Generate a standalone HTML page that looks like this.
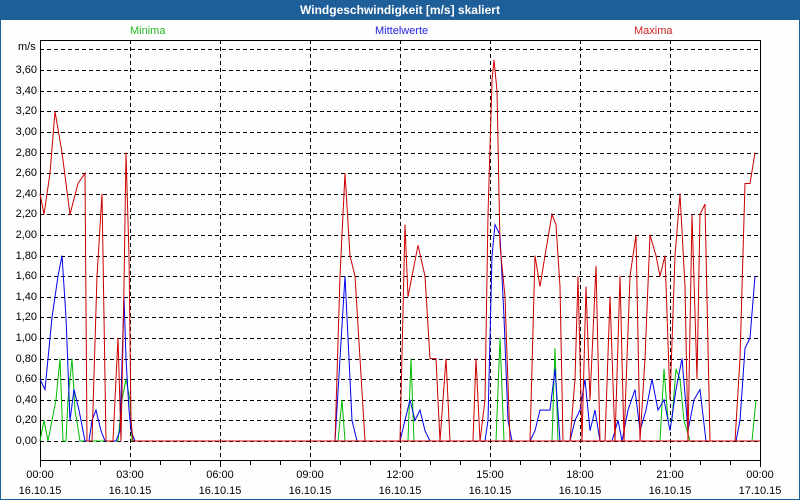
<!DOCTYPE html>
<html><head><meta charset="utf-8"><style>
body{margin:0;width:800px;height:500px;overflow:hidden;background:#fff;font-family:"Liberation Sans",sans-serif;}
#wrap{position:absolute;left:0;top:0;width:798px;height:498px;border:1px solid #1f5f99;background:#fefefe}
#title{position:absolute;left:0;top:0;width:800px;height:20px;background:#1f5f99;color:#fff;font-weight:bold;font-size:12px;line-height:20px;text-align:center}
.t{position:absolute;font-size:11px;color:#000;white-space:nowrap}
</style></head><body>
<div id="wrap"></div>
<div id="title">Windgeschwindigkeit [m/s] skaliert</div>
<div class="t" style="left:130px;top:25px;color:#22bb22">Minima</div>
<div class="t" style="left:375px;top:25px;color:#2222dd">Mittelwerte</div>
<div class="t" style="left:634px;top:25px;color:#cc2222">Maxima</div>
<div class="t" style="left:18px;top:41px">m/s</div>
<div id="ylab"></div>
<div id="xlab"></div>
<svg width="800" height="500" style="position:absolute;left:0;top:0">
<g id="grid" stroke="#000" stroke-width="1" stroke-dasharray="4,3" fill="none"></g>
<rect x="40.5" y="40.5" width="720" height="420" fill="none" stroke="#000"/>
<g id="ticks" stroke="#000"></g>
<g id="data" fill="none" stroke-width="1"></g>
</svg>
<script>
var Y=function(v){return 441-v*103;};
var g='',yl='';
for(var i=0;i<=18;i++){var v=i*0.2,y=Math.round(Y(v))+0.5;g+='<line x1="40" x2="760" y1="'+y+'" y2="'+y+'"/>';
yl+='<div class="t" style="right:'+(800-37)+'px;top:'+(y-7)+'px;width:40px;text-align:right;right:auto;left:-3px">'+v.toFixed(2).replace('.',',')+'</div>';}
g+='<line x1="40" x2="760" y1="49.5" y2="49.5"/>';
for(var h=3;h<24;h+=3){var x=40+h*30+0.5;g+='<line x1="'+x+'" x2="'+x+'" y1="40" y2="460"/>';}
document.getElementById('grid').innerHTML=g;
document.getElementById('ylab').innerHTML=yl;
var tk='',xl='';
for(var h=0;h<=24;h++){var x=40+h*30+0.5;tk+='<line x1="'+x+'" x2="'+x+'" y1="460" y2="'+(h%3==0?467:465)+'"/>';}
document.getElementById('ticks').innerHTML=tk;
for(var h=0;h<=24;h+=3){var x=40+h*30;var hh=(h%24<10?'0':'')+(h%24)+':00';var d=h==24?'17.10.15':'16.10.15';
xl+='<div class="t" style="left:'+(x-30)+'px;width:60px;text-align:center;top:469px">'+hh+'</div><div class="t" style="left:'+(x-30)+'px;width:60px;text-align:center;top:485px">'+d+'</div>';}
document.getElementById('xlab').innerHTML=xl;
var red=[40,2.4,44,2.2,50,2.6,55,3.2,62,2.8,70,2.2,78,2.5,85,2.6,87,0,92,0,97,1.6,102,2.4,106,0,113,0,118,1.0,121,0,124,1.5,126,2.8,129,1.8,131,0.2,133,0,335,0,340,1.6,345,2.6,350,1.8,355,1.6,360,0.8,365,0,400,0,405,2.1,408,1.4,412,1.6,418,1.9,425,1.6,430,0.8,436,0.8,440,0,446,0.8,450,0,473,0,476,0.8,480,0,485,0.4,488,2.2,492,3.5,494,3.7,497,3.4,500,1.9,505,1.4,510,0,530,0,535,1.8,540,1.5,545,1.8,552,2.2,556,2.1,560,1.5,563,0,570,0,575,0.6,578,1.6,582,0,586,1.5,590,0.4,596,1.7,600,0,605,0,610,1.4,615,0,620,1.6,624,0,630,1.6,636,2.0,640,0,645,0.8,650,2.0,656,1.8,660,1.6,665,1.8,670,0.4,675,1.8,680,2.4,685,1.5,688,0,692,2.2,697,0.6,700,2.2,705,2.3,710,0,735,0,740,0.8,745,2.5,750,2.5,755,2.8];
var blue=[40,0.6,45,0.5,52,1.2,58,1.6,62,1.8,66,1.2,70,0.2,74,0.5,79,0.3,85,0,89,0,92,0.2,96,0.3,101,0.1,105,0,116,0,120,0.1,124,1.4,126,0.8,129,0.3,131,0.1,135,0,335,0,340,0.8,345,1.6,348,1.0,352,0.2,357,0,400,0,405,0.2,410,0.4,415,0.2,420,0.3,425,0.1,430,0,485,0,488,0.2,492,1.8,495,2.1,500,2.0,504,1.2,508,0.2,512,0,530,0,535,0.1,540,0.3,550,0.3,555,0.7,560,0,570,0,575,0.2,580,0.3,585,0.6,590,0.1,595,0.3,600,0,612,0,618,0.2,622,0,628,0.3,635,0.5,640,0.1,646,0.3,652,0.6,658,0.3,664,0.4,670,0.1,676,0.5,682,0.8,688,0.1,694,0.4,700,0.5,706,0,736,0,740,0.2,745,0.9,750,1.0,755,1.6];
var green=[40,0,44,0.2,48,0,52,0.2,56,0.4,60,0.8,63,0,66,0,68,0.4,72,0.8,75,0.3,80,0,118,0,122,0.4,126,0.6,130,0.4,132,0,338,0,342,0.4,345,0,408,0,411,0.8,414,0,496,0,500,1.0,504,0,552,0,555,0.9,558,0,660,0,664,0.7,668,0.2,672,0.2,676,0.7,680,0.6,684,0.2,690,0,752,0,756,0.4];
function pl(a,c){var p='';for(var i=0;i<a.length;i+=2)p+=a[i]+','+Y(a[i+1]).toFixed(1)+' ';return '<polyline stroke="'+c+'" points="'+p+'"/>';}
document.getElementById('data').innerHTML=pl(green,'#00bb00')+pl(blue,'#0000ee')+pl(red,'#cc0000')+'<line x1="133" x2="760" y1="441" y2="441" stroke="#cc0000"/>';
</script>
</body></html>
